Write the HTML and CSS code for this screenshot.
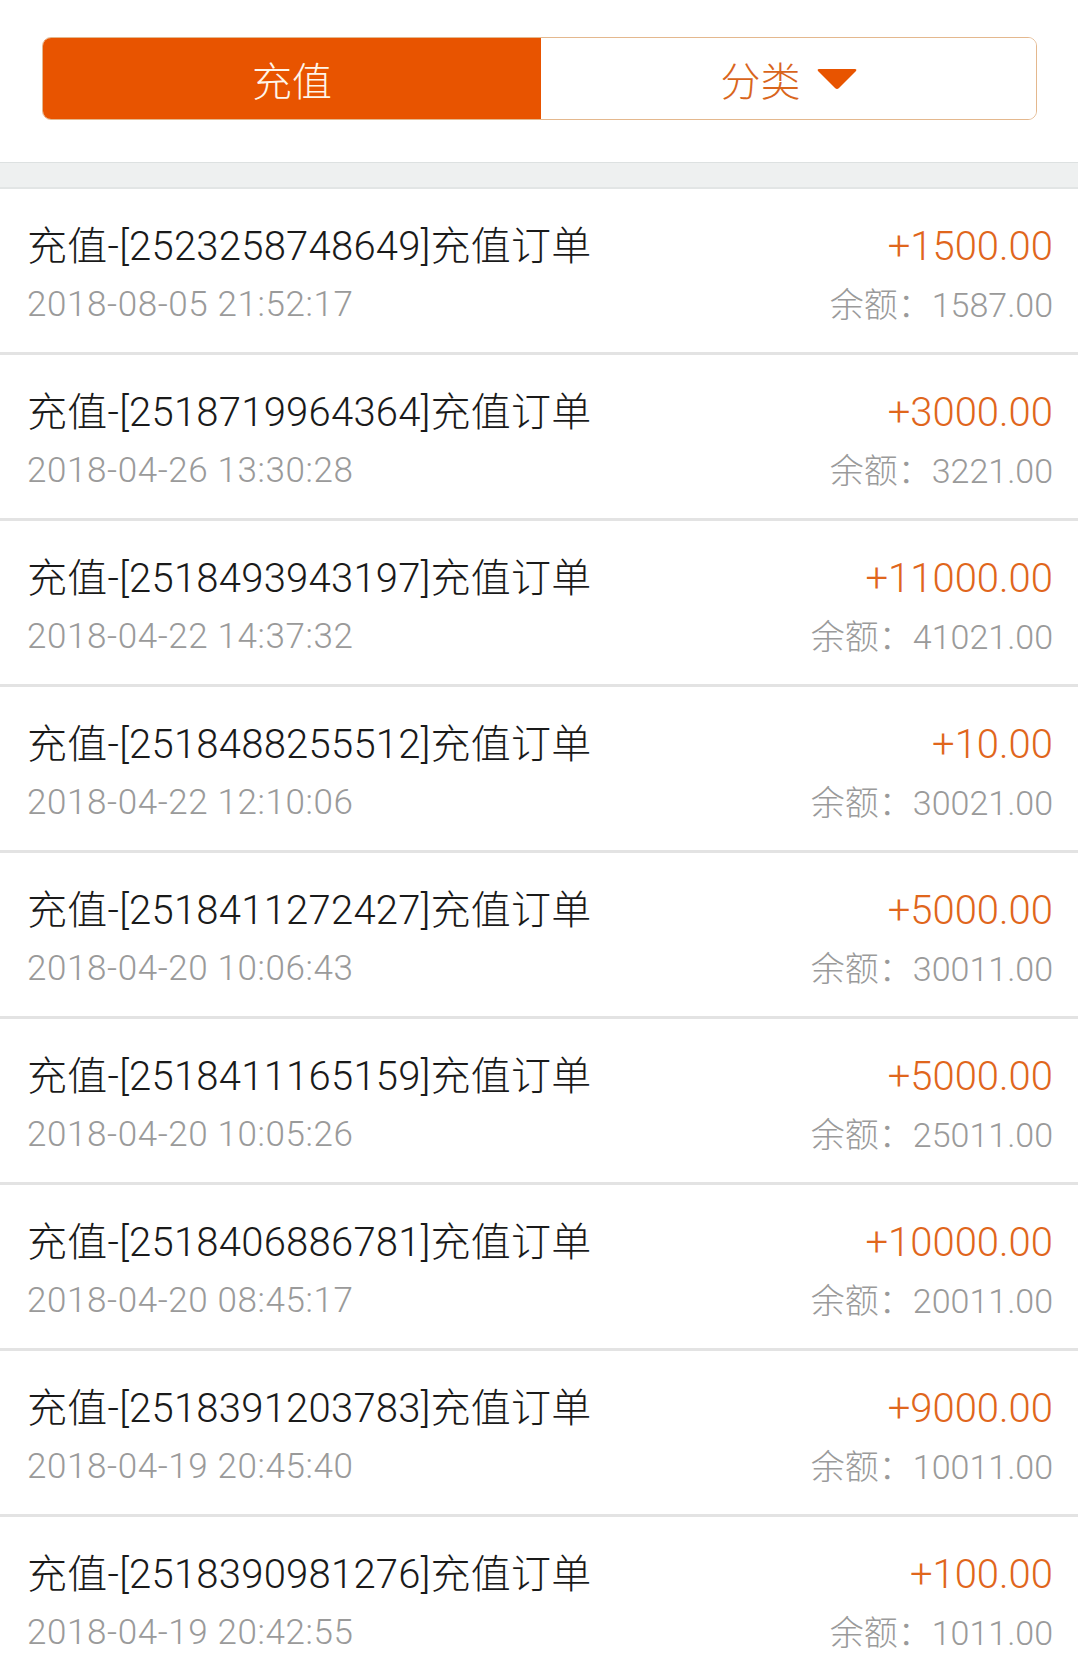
FILE: index.html
```html
<!DOCTYPE html>
<html lang="zh-CN">
<head>
<meta charset="utf-8">
<title>充值记录</title>
<link rel="stylesheet" href="styles.css">
</head>
<body>
<div class="top">
  <div class="seg">
    <div class="seg-item active">充值</div>
    <div class="seg-item">
      <span>分类</span>
      <svg class="tri" width="40" height="22" viewBox="0 0 40 22"><path d="M2 1 L38 1 Q40 1 39 3 L22 20 Q20 22 18 20 L1 3 Q0 1 2 1 Z" fill="#e85400"/></svg>
    </div>
  </div>
</div>
<div class="band"></div>
<ul class="list">
  <li class="row"><div class="l"><div class="title">充值-[2523258748649]充值订单</div><div class="date">2018-08-05 21:52:17</div></div><div class="r"><div class="amt">+1500.00</div><div class="bal">余额：1587.00</div></div></li>
  <li class="row"><div class="l"><div class="title">充值-[2518719964364]充值订单</div><div class="date">2018-04-26 13:30:28</div></div><div class="r"><div class="amt">+3000.00</div><div class="bal">余额：3221.00</div></div></li>
  <li class="row"><div class="l"><div class="title">充值-[2518493943197]充值订单</div><div class="date">2018-04-22 14:37:32</div></div><div class="r"><div class="amt">+11000.00</div><div class="bal">余额：41021.00</div></div></li>
  <li class="row"><div class="l"><div class="title">充值-[2518488255512]充值订单</div><div class="date">2018-04-22 12:10:06</div></div><div class="r"><div class="amt">+10.00</div><div class="bal">余额：30021.00</div></div></li>
  <li class="row"><div class="l"><div class="title">充值-[2518411272427]充值订单</div><div class="date">2018-04-20 10:06:43</div></div><div class="r"><div class="amt">+5000.00</div><div class="bal">余额：30011.00</div></div></li>
  <li class="row"><div class="l"><div class="title">充值-[2518411165159]充值订单</div><div class="date">2018-04-20 10:05:26</div></div><div class="r"><div class="amt">+5000.00</div><div class="bal">余额：25011.00</div></div></li>
  <li class="row"><div class="l"><div class="title">充值-[2518406886781]充值订单</div><div class="date">2018-04-20 08:45:17</div></div><div class="r"><div class="amt">+10000.00</div><div class="bal">余额：20011.00</div></div></li>
  <li class="row"><div class="l"><div class="title">充值-[2518391203783]充值订单</div><div class="date">2018-04-19 20:45:40</div></div><div class="r"><div class="amt">+9000.00</div><div class="bal">余额：10011.00</div></div></li>
  <li class="row"><div class="l"><div class="title">充值-[2518390981276]充值订单</div><div class="date">2018-04-19 20:42:55</div></div><div class="r"><div class="amt">+100.00</div><div class="bal">余额：1011.00</div></div></li>
</ul>
</body>
</html>
```
FILE: styles.css
```css
* { box-sizing: border-box; }
html, body { margin: 0; padding: 0; background: #fff; }
body {
  font-family: Roboto, "Noto Sans CJK SC", sans-serif;
  font-weight: 300;
  overflow: hidden;
}
.top {
  height: 162px;
  padding: 37px 41px 0 42px;
}
.seg {
  display: flex;
  height: 83px;
  border: 1px solid #e4b88e;
  border-radius: 9px;
  overflow: hidden;
}
.seg-item {
  flex: 1;
  display: flex;
  align-items: center;
  justify-content: center;
  gap: 16px;
  font-size: 40px;
  color: #d9651c;
  font-family: "Noto Sans CJK SC", sans-serif;
  font-weight: 300;
  background: #fff;
}
.seg-item.active {
  flex: 0 0 498px;
  background: #e85400;
  color: #fff6ea;
}
.tri { display: block; margin-top: 0; }
.band {
  height: 27px;
  background: #eef0f0;
  border-top: 1px solid #dde1e1;
  border-bottom: 2px solid #e2e5e5;
}
.list { list-style: none; margin: 0; padding: 0; }
.row {
  display: flex;
  justify-content: space-between;
  height: 166px;
  padding: 34px 25px 0 27px;
  border-bottom: 3px solid #e3e3e3;
}
.title {
  font-size: 40px;
  line-height: 48px;
  color: #1a1a1a;
  letter-spacing: 0.25px;
}
.date, .bal {
  margin-top: 14px;
  font-size: 34px;
  line-height: 40px;
  color: #9a9a9a;
}
.date {
  font-size: 35px;
  letter-spacing: 0.6px;
}
.r { text-align: right; }
.amt {
  font-size: 40px;
  line-height: 48px;
  color: #e0661c;
}
```
